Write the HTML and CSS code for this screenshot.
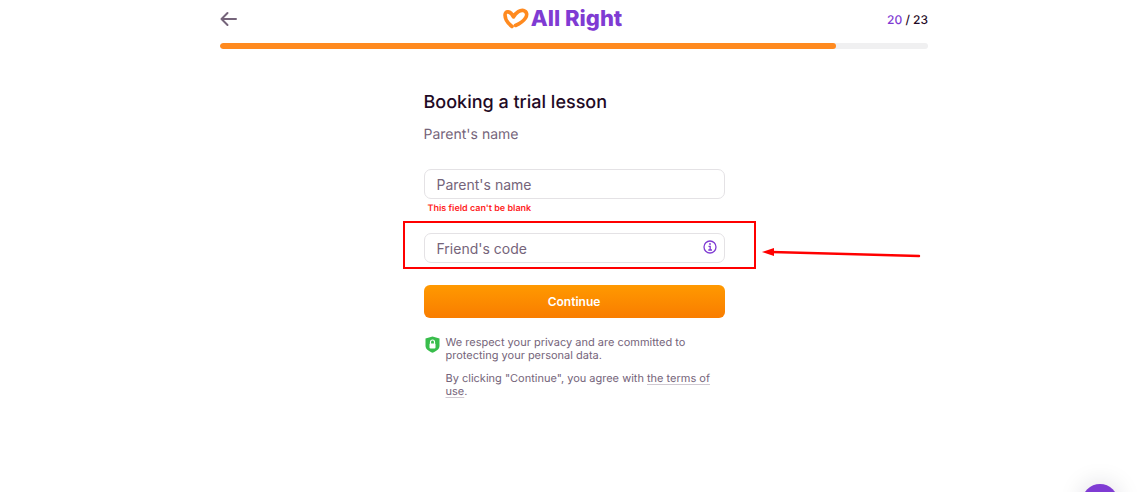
FILE: index.html
```html
<!DOCTYPE html>
<html lang="en">
<head>
  <meta charset="UTF-8" />
  <meta name="viewport" content="width=device-width, initial-scale=1" />
  <title>All Right - Booking a trial lesson</title>
  <link rel="stylesheet" href="styles.css">
</head>
<body>
  <div class="page">
    <header class="top-bar">
      <button type="button" class="back" aria-label="Back">
        <svg width="18" height="16" viewBox="0 0 18 16" fill="none" stroke="#75647a" stroke-width="2" stroke-linecap="round" stroke-linejoin="round">
          <path d="M16 8H1.5M7.5 2L1.5 8l6 6" />
        </svg>
      </button>
      <a href="#" class="logo">
        <svg width="26" height="22" viewBox="0 0 26 22" fill="none" stroke="#ff8a1f" stroke-width="3.600" stroke-linecap="round" stroke-linejoin="round">
          <path d="M9 18.500C5 15.500 2 11 2 7C2 2.500 7.500 2.500 10.500 9C13 4 17.500 1.800 20.500 2.500C24 3.500 24.500 7 22.500 10C20.500 13 17 15.500 12.500 17.500" />
        </svg>
        <span>All Right</span>
      </a>
      <div class="step"><span>20</span> / 23</div>
    </header>
    <div class="progress">
      <div class="progress-fill" style="width: 87%"></div>
    </div>

    <main>
      <h1>Booking a trial lesson</h1>
      <p class="subtitle">Parent's name</p>

      <form>
        <div class="field">
          <input type="text" id="parent-name" placeholder="Parent's name" aria-label="Parent's name" />
        </div>
        <p class="error">This field can't be blank</p>

        <div class="field">
          <input type="text" id="friend-code" placeholder="Friend's code" aria-label="Friend's code" />
          <button type="button" class="info" aria-label="About the code">
            <svg width="14" height="14" viewBox="0 0 14 14" fill="none" stroke="#7f3bd3" stroke-width="1.300">
              <circle cx="7" cy="7" r="6" />
              <path d="M5.500 6.300H7.200V10M5.300 10H9" />
              <circle cx="7" cy="4" r="0.900" fill="#7f3bd3" stroke="none" />
            </svg>
          </button>
          <div class="highlight"></div>
          <svg class="pointer" width="160" height="12" viewBox="0 0 160 12">
            <path d="M10 5L157 9" stroke="#f00" stroke-width="2.400" stroke-linecap="round" />
            <path d="M0 5L12 1V9Z" fill="#f00" />
          </svg>
        </div>

        <button type="submit" class="continue">Continue</button>
      </form>

      <div class="legal">
        <svg width="15" height="17" viewBox="0 0 15 17">
          <path d="M7.500 0.500L14.500 2.500V10C14.500 13 11 15.500 7.500 16.800C4 15.500 0.500 13 0.500 10V2.500Z" fill="#38bd4b" />
          <path d="M5.500 8V6a2 2 0 0 1 4 0V8" fill="none" stroke="#fff" stroke-width="1.200" />
          <rect x="4.500" y="7.500" width="6" height="5" rx="1" fill="#fff" />
        </svg>
        <div>
          <p>We respect your privacy and are committed to protecting your personal data.</p>
          <p>By clicking "Continue", you agree with <a href="#">the terms of use</a>.</p>
        </div>
      </div>
    </main>
  </div>

  <button type="button" class="chat" aria-label="Chat"></button>
</body>
</html>
```
FILE: styles.css
```css
* {
  box-sizing: border-box;
}

body {
  margin: 0;
  padding-left: 3px;
  font-family: Inter, "Liberation Sans", sans-serif;
  text-rendering: geometricPrecision;
  color: #1f0a25;
  background-color: #fff;
}

h1, p {
  margin: 0;
}

button {
  font-family: inherit;
  padding: 0;
  border: none;
  background: none;
  cursor: pointer;
}

.page {
  width: 62%;
  margin: 0 auto;
}

/* Header */
.top-bar {
  display: flex;
  justify-content: space-between;
  align-items: center;
  height: 38px;
}

.back {
  display: flex;
}

.logo {
  display: flex;
  align-items: center;
  gap: 2px;
  color: #7f3bd3;
  font-size: 22px;
  font-weight: 800;
  line-height: 24px;
  text-decoration: none;
}

.step {
  font-size: 12px;
  font-weight: 500;
}

.step span {
  color: #7f3bd3;
}

.progress {
  height: 6px;
  margin-top: 5px;
  border-radius: 3px;
  background-color: #f0f0f1;
  overflow: hidden;
}

.progress-fill {
  height: 100%;
  border-radius: 3px;
  background-color: #ff8a1f;
}

/* Form */
main {
  max-width: 301px;
  margin: 0 auto;
  padding-top: 42px;
}

h1 {
  font-size: 18px;
  font-weight: 500;
  line-height: 24px;
}

.subtitle {
  margin-top: 10px;
  color: #75647a;
  font-size: 14px;
  line-height: 20px;
}

form {
  margin-top: 24px;
}

.field {
  position: relative;
}

.field input {
  display: block;
  width: 100%;
  height: 30px;
  padding: 0 12px;
  border: 1px solid #e4e2e5;
  border-radius: 7px;
  font-family: inherit;
  font-size: 14px;
  color: #1f0a25;
}

.field input::placeholder {
  color: #75647a;
  opacity: 1;
}

.error {
  padding: 4px 4px 18px;
  color: #ff1f1f;
  font-size: 9px;
  font-weight: 600;
  line-height: 12px;
}

.info {
  position: absolute;
  top: 7px;
  right: 8px;
  display: flex;
}

.highlight {
  position: absolute;
  top: -12px;
  right: -31px;
  bottom: -6px;
  left: -21px;
  border: 2px solid #f00;
  pointer-events: none;
}

.pointer {
  position: absolute;
  top: 14px;
  left: 100%;
  margin-left: 37px;
}

.continue {
  display: block;
  width: 100%;
  height: 33px;
  margin-top: 22px;
  border-radius: 6px;
  background: linear-gradient(#ff9900, #f97d00);
  color: #fff;
  font-size: 12px;
  font-weight: 600;
}

.legal {
  display: flex;
  align-items: flex-start;
  gap: 6px;
  margin-top: 18px;
  padding-left: 1px;
  color: #75647a;
  font-size: 11px;
  line-height: 13px;
}

.legal svg {
  flex-shrink: 0;
}

.legal p + p {
  margin-top: 10px;
}

.legal a {
  color: inherit;
  text-decoration: underline;
  text-decoration-color: #cfc9d1;
  text-underline-offset: 2px;
}

/* Chat button */
.chat {
  position: fixed;
  right: 27px;
  bottom: -28px;
  width: 36px;
  height: 36px;
  border-radius: 50%;
  background-color: #7f3bd3;
  box-shadow: 0 0 24px rgba(30, 10, 50, 0.15);
}
```
